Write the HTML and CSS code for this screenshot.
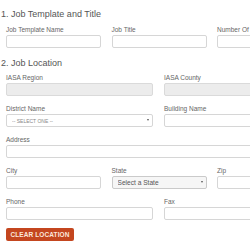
FILE: index.html
```html
<!DOCTYPE html>
<html lang="en">
  <head>
    <meta charset="UTF-8" />
    <meta name="viewport" content="width=device-width, initial-scale=1.0" />
    <title>Job Posting</title>
    <link rel="stylesheet" href="styles.css">
  </head>
  <body>
    <form id="job-form">
      <h2 class="section-title">1. Job Template and Title</h2>
      <div class="row three">
        <div class="form-group">
          <label for="template-name">Job Template Name</label>
          <input type="text" id="template-name" />
        </div>
        <div class="form-group">
          <label for="job-title">Job Title</label>
          <input type="text" id="job-title" />
        </div>
        <div class="form-group">
          <label for="openings">Number Of Openings</label>
          <input type="text" id="openings" />
        </div>
      </div>

      <h2 class="section-title">2. Job Location</h2>
      <div class="row two">
        <div class="form-group">
          <label for="region">IASA Region</label>
          <input type="text" id="region" disabled />
        </div>
        <div class="form-group">
          <label for="county">IASA County</label>
          <input type="text" id="county" disabled />
        </div>
      </div>
      <div class="row two">
        <div class="form-group">
          <label for="district">District Name</label>
          <div class="select-wrap">
            <select id="district" class="small-select">
              <option>-- SELECT ONE --</option>
            </select>
          </div>
        </div>
        <div class="form-group">
          <label for="building">Building Name</label>
          <input type="text" id="building" />
        </div>
      </div>
      <div class="form-group">
        <label for="address">Address</label>
        <input type="text" id="address" />
      </div>
      <div class="row three">
        <div class="form-group">
          <label for="city">City</label>
          <input type="text" id="city" />
        </div>
        <div class="form-group">
          <label for="state">State</label>
          <div class="select-wrap">
            <select id="state" class="state-select">
              <option>Select a State</option>
            </select>
          </div>
        </div>
        <div class="form-group">
          <label for="zip">Zip</label>
          <input type="text" id="zip" />
        </div>
      </div>
      <div class="row two">
        <div class="form-group">
          <label for="phone">Phone</label>
          <input type="text" id="phone" />
        </div>
        <div class="form-group">
          <label for="fax">Fax</label>
          <input type="text" id="fax" />
        </div>
      </div>
      <button type="button" class="btn-clear">CLEAR LOCATION</button>
    </form>
  </body>
</html>
```

FILE: styles.css
```css
html {
  overflow: hidden;
}
body {
  font-family: "Liberation Sans", Arial, sans-serif;
  margin: 0;
  padding: 0;
  background: #fff;
}
#job-form {
  width: 311px;
  padding: 7px 0 0 6px;
}
.section-title {
  font-size: 9px;
  line-height: 14px;
  font-weight: normal;
  color: #555;
  margin: 0 0 4px -6px;
  padding-left: 1px;
}
.section-title + .row.two {
  margin-top: -1px;
}
.row {
  display: grid;
}
.row.three {
  grid-template-columns: repeat(3, 95px);
  column-gap: 10.5px;
}
.row.two {
  grid-template-columns: repeat(2, 147px);
  column-gap: 11px;
}
.form-group {
  margin-bottom: 8px;
}
label {
  display: block;
  font-size: 6.5px;
  line-height: 10px;
  color: #666;
  white-space: nowrap;
}
input,
select {
  display: block;
  width: 100%;
  height: 13px;
  box-sizing: border-box;
  border: 1px solid #d6d6d6;
  border-radius: 2px;
  background: #fff;
  margin: 0;
  padding: 0 4px;
  font-family: inherit;
}
input:disabled {
  background: #ececec;
  border-color: #dadada;
}
.select-wrap {
  position: relative;
}
.select-wrap::after {
  content: "";
  position: absolute;
  right: 4px;
  top: 5px;
  border-left: 1.5px solid transparent;
  border-right: 1.5px solid transparent;
  border-top: 2.5px solid #555;
}
select {
  appearance: none;
  -webkit-appearance: none;
}
.small-select {
  font-size: 5px;
  color: #888;
  padding-left: 5px;
}
.state-select {
  font-size: 6.6px;
  color: #555;
  background: #f6f6f6;
  border-color: #cacaca;
  padding-left: 5px;
}
.btn-clear {
  display: block;
  width: 68px;
  height: 13px;
  padding: 0;
  border: none;
  border-radius: 2px;
  background: #c4461f;
  color: #fbe6dc;
  font-family: inherit;
  font-size: 6.5px;
  font-weight: bold;
  letter-spacing: 0.1px;
}
```
